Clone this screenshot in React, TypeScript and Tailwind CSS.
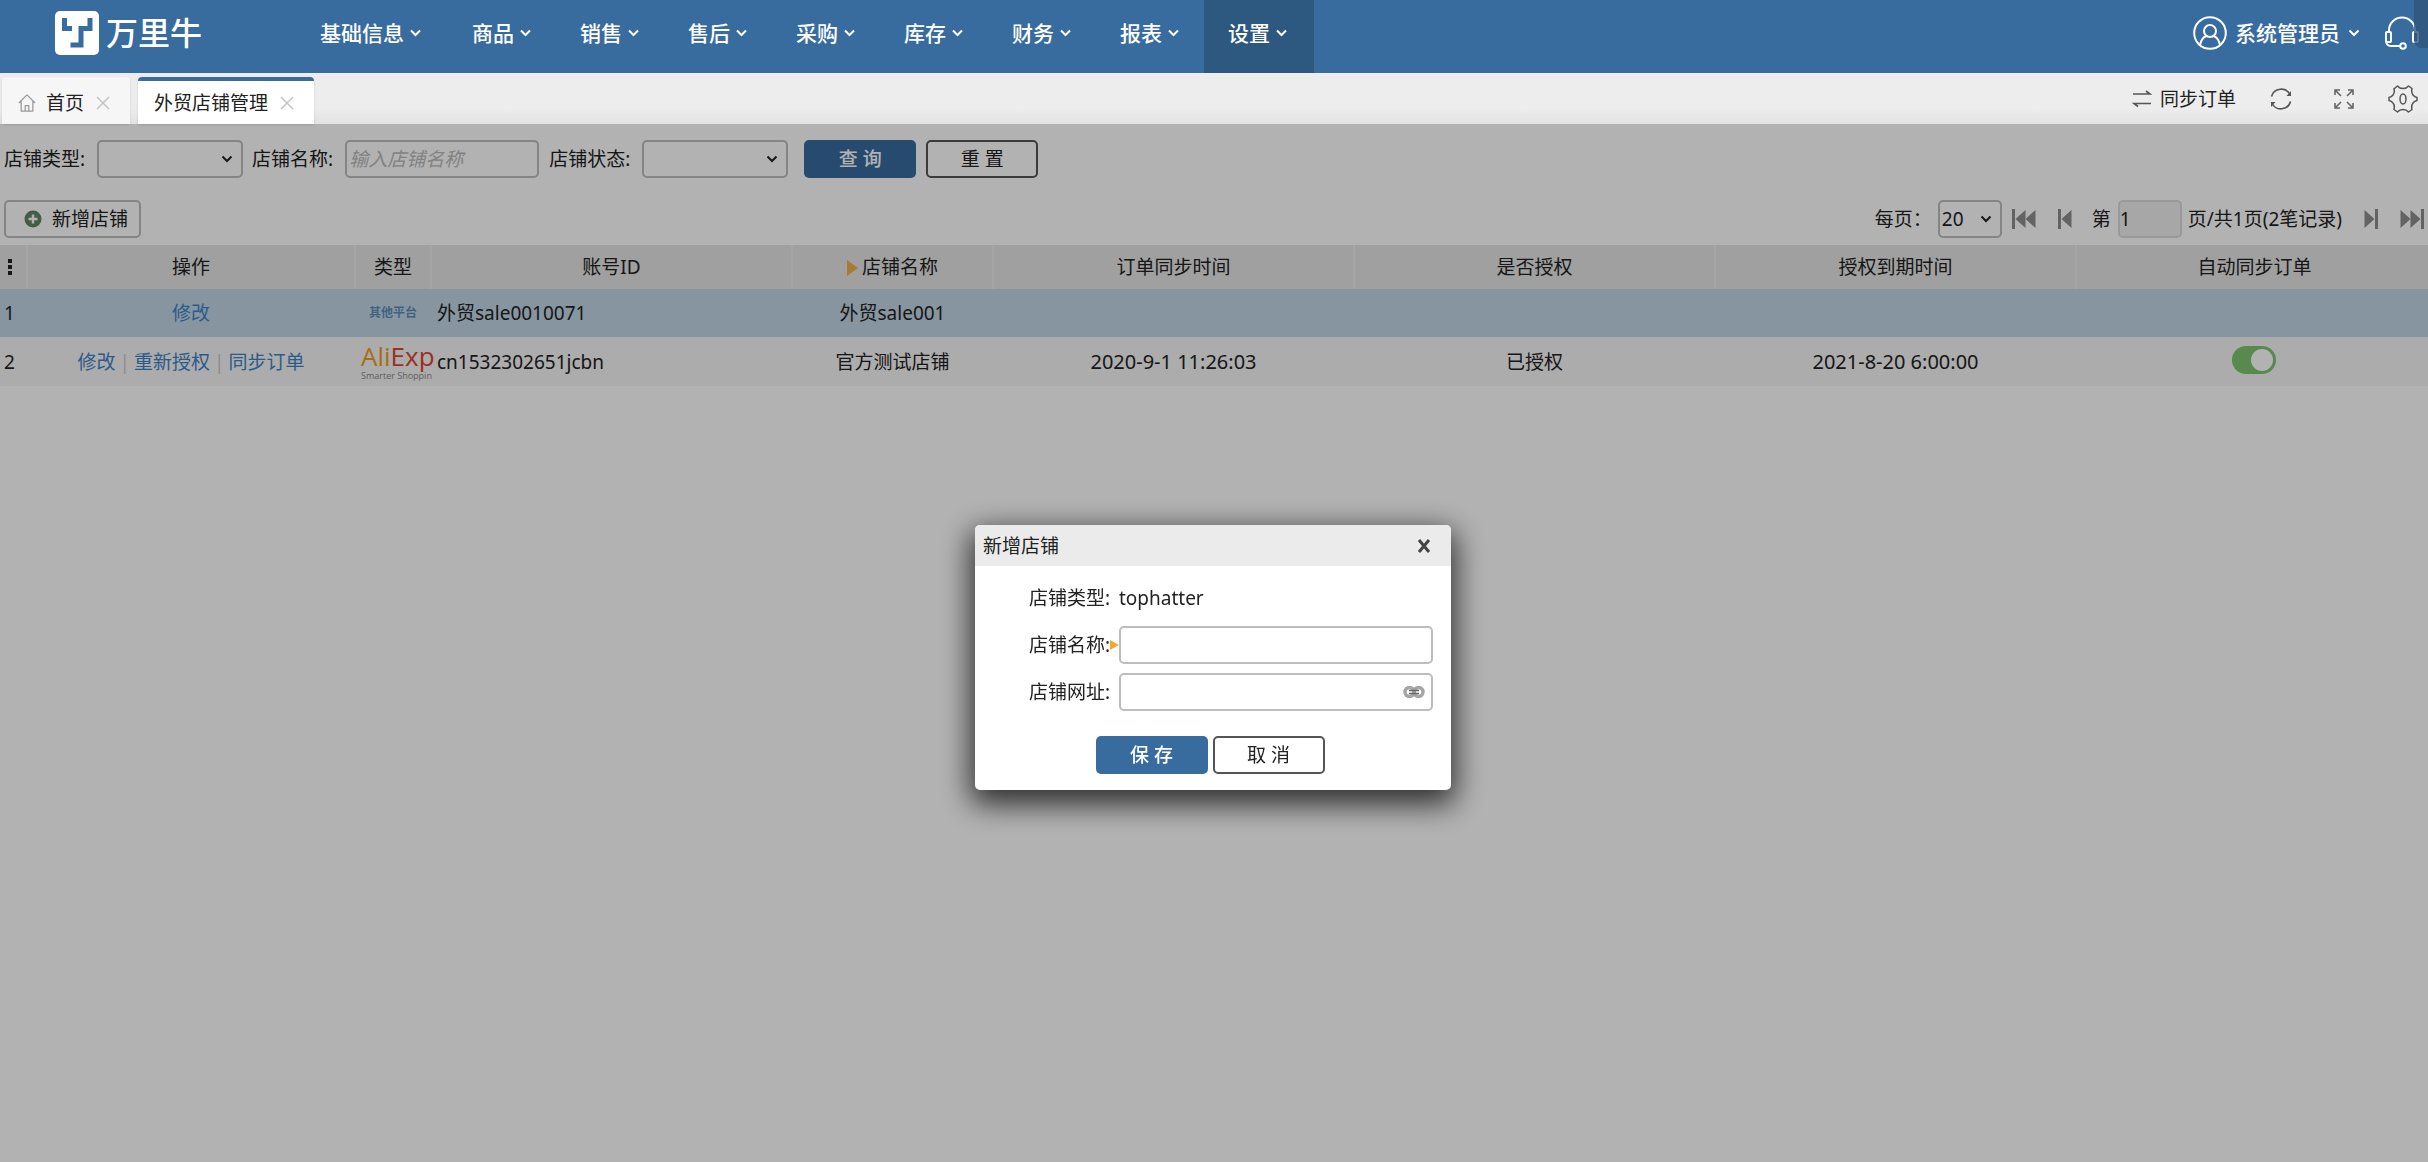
import { ReactNode, useState } from "react";

const navItems = ["基础信息", "商品", "销售", "售后", "采购", "库存", "财务", "报表", "设置"];

const inputClass = "h-[38px] rounded-[5px] border-2 border-[#bdbdbd] bg-white px-0.5 outline-none";
const primaryButton = "h-[38px] w-28 rounded-[5px] bg-[#386c9f] font-medium text-white";
const plainButton = "h-[38px] w-28 rounded-[5px] border-2 border-[#555] bg-white text-[#222]";

function Chevron({ className = "" }: { className?: string }) {
  return (
    <svg viewBox="0 0 12 8" className={`w-3 h-2 ${className}`} fill="none" stroke="currentColor" strokeWidth="2">
      <path d="M1.5 1.5 6 6l4.5-4.5" />
    </svg>
  );
}

function SelectBox({ id, width, children }: { id: string; width: string; children?: ReactNode }) {
  return (
    <span className="relative inline-flex items-center">
      <select id={id} className={`${inputClass} ${width} appearance-none`}>
        {children}
      </select>
      <Chevron className="absolute right-2.5 pointer-events-none" />
    </span>
  );
}

function Logo() {
  return (
    <a href="#" className="flex items-center gap-[7px] pl-[55px] w-[296px] text-white" aria-label="万里牛">
      <svg viewBox="0 0 44 44" className="w-11 h-11">
        <rect width="44" height="44" rx="5" fill="#fff" />
        <path d="M9.500 7v10.500H17M35 7v10.500h-9V34H15.500" fill="none" stroke="#386c9f" strokeWidth="5" />
      </svg>
      <span className="text-[32px] leading-none font-medium">万里牛</span>
    </a>
  );
}

function HomeIcon() {
  return (
    <svg viewBox="0 0 20 20" className="w-[18px] h-[18px]" fill="none" stroke="#999" strokeWidth="1.4" strokeLinejoin="round">
      <path d="M1 10 10 1l9 9M3.500 8v11h13V8M8 19v-6h4v6" />
    </svg>
  );
}

function CloseIcon() {
  return (
    <svg viewBox="0 0 14 14" className="w-3.5 h-3.5" fill="none" stroke="#c4c4c4" strokeWidth="1.5">
      <path d="m1 1 12 12M13 1 1 13" />
    </svg>
  );
}

function UserIcon() {
  return (
    <svg viewBox="0 0 34 34" className="w-[34px] h-[34px]" fill="none" stroke="currentColor" strokeWidth="2">
      <circle cx="17" cy="17" r="15.800" />
      <circle cx="17" cy="15" r="6" />
      <path d="M7 29c1-5 3.500-8 6.500-9M27 29c-1-5-3.500-8-6.500-9" />
    </svg>
  );
}

function HeadsetIcon() {
  return (
    <svg viewBox="0 0 36 34" className="w-9 h-[34px]" fill="none" stroke="currentColor" strokeWidth="2">
      <path d="M5 16v-2a13 12.500 0 0 1 26 0v2" />
      <rect x="2" y="16" width="5" height="10" rx="1" />
      <rect x="29" y="16" width="5" height="10" rx="1" />
      <path d="M2 24c0 4 1 6 5 6h9" />
      <circle cx="19" cy="30" r="2.800" />
    </svg>
  );
}

function SyncIcon() {
  return (
    <svg viewBox="0 0 20 18" className="w-5 h-[18px]" fill="none" stroke="#555" strokeWidth="1.600">
      <path d="M1 4h17l-4-3M19 13.500H2l4 3" />
    </svg>
  );
}

function RefreshIcon() {
  return (
    <svg viewBox="0 0 22 22" className="w-[22px] h-[22px]" fill="none" stroke="#555" strokeWidth="1.600">
      <path d="M1.500 8.500A10 10 0 0 1 20 6.500M20.500 13.500A10 10 0 0 1 2 15.500" />
      <path d="M21 3v5h-4.500zM1 19v-5h4.500z" fill="#555" stroke="none" />
    </svg>
  );
}

function ExpandIcon() {
  return (
    <svg viewBox="0 0 20 20" className="w-5 h-5" fill="none" stroke="#666" strokeWidth="1.600">
      <path d="M1 6V1h5M1 1l6 6M14 1h5v5M19 1l-6 6M1 14v5h5M1 19l6-6M14 19h5v-5M19 19l-6-6" />
    </svg>
  );
}

function GearIcon() {
  return (
    <svg viewBox="0 0 30 28" className="w-[30px] h-7" fill="none" stroke="#555" strokeWidth="1.500" strokeLinejoin="round">
      <path d="M6.500 3.500 9.500 1q2 2.500 5.500 2.500T20.500 1l3.500 2.500q-1 4 1 6.500 1.500 2 4 2.500v3q-2.500.5-4 2.500-2 2.500-1 6.500L20.500 27q-2-2.500-5.500-2.500T9.500 27L6 24.500q1-4-1-6.500-1.500-2-4-2.500v-3q2.500-.5 4-2.500 2-2.500 1-6.500Z" />
      <ellipse cx="15" cy="14" rx="3" ry="5" />
    </svg>
  );
}

function PageIcon({ double, flip }: { double?: boolean; flip?: boolean }) {
  return (
    <svg viewBox={double ? "0 0 24 20" : "0 0 14 20"} className={`h-5 ${double ? "w-6" : "w-3.5"} ${flip ? "rotate-180" : ""}`} fill="#8e8e8e">
      <path d="M0 0h3v20H0zM13.500 1v18L3.500 10z" />
      {double && <path d="M23.500 1v18L13.500 10z" />}
    </svg>
  );
}

function LinkIcon() {
  return (
    <svg viewBox="0 0 22 14" className="w-[22px] h-3.5" fill="none">
      <rect x="2" y="2.500" width="9" height="9" rx="4.500" stroke="#a5a5a5" strokeWidth="3.500" />
      <rect x="11" y="2.500" width="9" height="9" rx="4.500" stroke="#a5a5a5" strokeWidth="3.500" />
      <path d="M6 5.500h10M6 8.500h10" stroke="#666" strokeWidth="1.500" />
    </svg>
  );
}

function RequiredMark() {
  return (
    <svg viewBox="0 0 9 12" className="w-[9px] h-3 inline-block" fill="#f0a830">
      <path d="M0 1 9 6l-9 5z" />
    </svg>
  );
}

function TopNav() {
  return (
    <header className="flex h-[73px] bg-[#386c9f] text-white text-[21px] font-medium">
      <div className="flex pb-2">
        <Logo />
      </div>
      <nav className="flex">
        {navItems.map((item) => (
          <button
            key={item}
            className={`flex items-center gap-[5px] px-6 pb-2 last:pr-[26px] ${item === "设置" ? "bg-[#2d5880]" : ""} first:pr-[26px]`}
          >
            {item}
            <Chevron className="w-[13px]" />
          </button>
        ))}
      </nav>
      <div className="relative ml-auto flex items-center pb-2 pr-2">
        <button className="flex items-center gap-2 mr-6">
          <UserIcon />
          <span>系统管理员</span>
          <Chevron />
        </button>
        <button aria-label="客服">
          <HeadsetIcon />
        </button>
        <span className="absolute right-0 top-0 w-3.5 h-12 rounded-bl-lg bg-[#2f5579]/80" />
      </div>
    </header>
  );
}

function TabBar() {
  return (
    <div className="flex items-end h-[51px] bg-linear-to-b from-[#ededed] from-70% to-[#e2e2e2]">
      <div className="flex items-center h-[47px] ml-0.5 pl-4 pr-5 gap-3 rounded-t bg-[#f6f6f6] shadow">
        <button className="flex items-center gap-2.5 pt-1">
          <HomeIcon />
          首页
        </button>
        <button aria-label="关闭首页" className="pt-1">
          <CloseIcon />
        </button>
      </div>
      <div className="flex items-center h-[47px] ml-2 pl-4 pr-5 gap-3 rounded-t border-t-4 border-[#386c9f] bg-white shadow">
        <button>外贸店铺管理</button>
        <button aria-label="关闭外贸店铺管理">
          <CloseIcon />
        </button>
      </div>
      <div className="flex items-center h-full ml-auto pr-2.5">
        <button className="flex items-center gap-2 mr-[34px]">
          <SyncIcon />
          同步订单
        </button>
        <button aria-label="刷新" className="mr-[42px]">
          <RefreshIcon />
        </button>
        <button aria-label="全屏" className="mr-[34px]">
          <ExpandIcon />
        </button>
        <button aria-label="设置">
          <GearIcon />
        </button>
      </div>
    </div>
  );
}

function SearchForm() {
  return (
    <form className="flex items-center pt-4 pl-1" onSubmit={(e) => e.preventDefault()}>
      <label htmlFor="shopType" className="mr-3">店铺类型:</label>
      <SelectBox id="shopType" width="w-[146px]" />
      <label htmlFor="shopName" className="ml-[9px] mr-3">店铺名称:</label>
      <input
        id="shopName"
        placeholder="输入店铺名称"
        className={`${inputClass} w-[194px] placeholder:italic placeholder:text-[#bbb]`}
      />
      <label htmlFor="shopStatus" className="ml-2.5 mr-3">店铺状态:</label>
      <SelectBox id="shopStatus" width="w-[146px]" />
      <button className={`${primaryButton} ml-4`}>查 询</button>
      <button type="reset" className={`${plainButton} ml-2.5`}>重 置</button>
    </form>
  );
}

function Toolbar() {
  return (
    <div className="flex items-center justify-between pt-[22px] pb-[7px] pl-1 pr-1">
      <button className="flex items-center gap-2.5 h-[38px] pr-[11px] pl-[18px] rounded-[5px] border-2 border-[#bdbdbd]">
        <svg viewBox="0 0 18 18" className="w-[18px] h-[18px]">
          <circle cx="9" cy="9" r="8.500" fill="#5f8468" />
          <path d="M9 4.500v9M4.500 9h9" stroke="#fff" strokeWidth="2.500" />
        </svg>
        新增店铺
      </button>
      <div className="flex items-center">
        <label htmlFor="pageSize">每页：</label>
        <span className="ml-1.5 mr-2.5">
          <SelectBox id="pageSize" width="w-16">
            <option>20</option>
          </SelectBox>
        </span>
        <button aria-label="首页"><PageIcon double /></button>
        <button aria-label="上一页" className="ml-[22px] mr-5"><PageIcon /></button>
        <label htmlFor="pageNo" className="mr-[7px]">第</label>
        <input id="pageNo" defaultValue="1" className="h-[38px] w-16 rounded-[5px] border-2 border-[#dcdcdc] bg-[#f0f0f0]" />
        <span className="ml-1.5">页/共1页(2笔记录)</span>
        <button aria-label="下一页" className="ml-[22px] mr-[22px]"><PageIcon flip /></button>
        <button aria-label="末页"><PageIcon double flip /></button>
      </div>
    </div>
  );
}

function ShopTable() {
  const [autoSync, setAutoSync] = useState(true);
  const th = "h-11 border-r-2 border-[#ececec] font-normal last:border-r-0";
  const link = "text-[#3d84c6]";

  return (
    <table className="w-full table-fixed border-collapse text-center">
      <colgroup>
        <col className="w-[27px]" />
        <col className="w-[328px]" />
        <col className="w-[76px]" />
        <col className="w-[361px]" />
        <col className="w-[201px]" />
        <col className="w-[361px]" />
        <col className="w-[361px]" />
        <col className="w-[361px]" />
        <col />
      </colgroup>
      <thead className="bg-[#e5e5e5]">
        <tr>
          <th className={th} aria-label="序号">
            <svg viewBox="0 0 4 16" className="w-1 h-4 ml-2" fill="#222">
              <path d="M0 0h4v4H0zM0 6h4v4H0zM0 12h4v4H0z" />
            </svg>
          </th>
          <th className={th}>操作</th>
          <th className={th}>类型</th>
          <th className={th}>账号ID</th>
          <th className={th}>
            <svg viewBox="0 0 11 16" className="w-[11px] h-4 inline-block align-[-2px] mr-1" fill="#f0b04a">
              <path d="M0 0 11 8 0 16z" />
            </svg>
            店铺名称
          </th>
          <th className={th}>订单同步时间</th>
          <th className={th}>是否授权</th>
          <th className={th}>授权到期时间</th>
          <th className={`${th} pl-1`}>自动同步订单</th>
        </tr>
      </thead>
      <tbody>
        <tr className="h-12 bg-[#c2d6e6]">
          <td className="text-left pl-1">1</td>
          <td><a href="#" className={link}>修改</a></td>
          <td className="text-xs font-bold text-[#5a8fbb]">其他平台</td>
          <td className="text-left pl-1.5">外贸sale0010071</td>
          <td>外贸sale001</td>
          <td />
          <td />
          <td />
          <td />
        </tr>
        <tr className="h-[49px] bg-[#f6f6f6]">
          <td className="text-left pl-1">2</td>
          <td>
            <a href="#" className={link}>修改</a>
            <span className="mx-1 text-[#ccc]">|</span>
            <a href="#" className={link}>重新授权</a>
            <span className="mx-1 text-[#ccc]">|</span>
            <a href="#" className={link}>同步订单</a>
          </td>
          <td className="pl-1.5">
            <div className="whitespace-nowrap text-left font-['Open_Sans',sans-serif]">
              <div className="text-[26px] leading-7 text-[#f09c1f]">
                Ali<span className="font-medium text-[#e0452c]">Exp</span>
              </div>
              <div className="text-[9px] leading-3 text-[#888]">Smarter Shoppin</div>
            </div>
          </td>
          <td className="text-left pl-1.5">cn1532302651jcbn</td>
          <td>官方测试店铺</td>
          <td className="text-xl">2020-9-1 11:26:03</td>
          <td>已授权</td>
          <td className="text-xl">2021-8-20 6:00:00</td>
          <td className="pl-1 pb-1">
            <label className="inline-flex align-middle">
              <input
                type="checkbox"
                role="switch"
                aria-label="自动同步订单"
                checked={autoSync}
                onChange={(e) => setAutoSync(e.target.checked)}
                className="peer sr-only"
              />
              <span className="flex w-11 h-7 rounded-full bg-gray-400 p-[3px] peer-checked:bg-[#7fc46f] peer-checked:justify-end">
                <span className="w-[22px] h-[22px] rounded-full bg-white" />
              </span>
            </label>
          </td>
        </tr>
      </tbody>
    </table>
  );
}

function AddShopDialog({ onClose }: { onClose: () => void }) {
  return (
    <div className="fixed inset-x-0 bottom-0 top-[124px] flex items-start justify-center bg-black/30 pt-[401px] pr-0.5">
      <div role="dialog" aria-labelledby="dialogTitle" className="w-[476px] rounded-[5px] bg-white shadow-[0_10px_30px_4px_rgba(0,0,0,0.75)]">
        <div className="flex items-center justify-between h-[41px] pl-2 pr-5 rounded-t-[5px] bg-[#ebebeb]">
          <h2 id="dialogTitle">新增店铺</h2>
          <button aria-label="关闭" onClick={onClose}>
            <svg viewBox="0 0 14 14" className="w-3.5 h-3.5" stroke="#444" strokeWidth="3">
              <path d="m2 1 10 12M12 1 2 13" />
            </svg>
          </button>
        </div>
        <form className="pt-3 pb-4" onSubmit={(e) => e.preventDefault()}>
          <div className="flex items-center h-10 pl-[54px]">
            <span className="w-[90px]">店铺类型:</span>
            <span>tophatter</span>
          </div>
          <div className="flex items-center mt-2 pl-[54px] pr-[18px]">
            <label htmlFor="newShopName">店铺名称:</label>
            <RequiredMark />
            <input id="newShopName" className={`${inputClass} flex-1 min-w-0`} />
          </div>
          <div className="flex items-center mt-[9px] pl-[54px] pr-[18px]">
            <label htmlFor="newShopUrl" className="w-[90px]">店铺网址:</label>
            <span className="relative flex flex-1 items-center">
              <input id="newShopUrl" className={`${inputClass} w-full pr-9`} />
              <button type="button" aria-label="打开网址" className="absolute right-2">
                <LinkIcon />
              </button>
            </span>
          </div>
          <div className="flex justify-center gap-[5px] mt-[25px] pr-1.5">
            <button className={primaryButton}>保 存</button>
            <button type="button" className={plainButton} onClick={onClose}>取 消</button>
          </div>
        </form>
      </div>
    </div>
  );
}

export default function App() {
  const [dialogOpen, setDialogOpen] = useState(true);

  return (
    <div className="min-h-screen bg-white text-[19px] leading-7 text-[#222] font-['Noto_Sans','Noto_Sans_CJK_SC',sans-serif]">
      <TopNav />
      <TabBar />
      <main>
        <SearchForm />
        <Toolbar />
        <ShopTable />
      </main>
      {dialogOpen && <AddShopDialog onClose={() => setDialogOpen(false)} />}
    </div>
  );
}
